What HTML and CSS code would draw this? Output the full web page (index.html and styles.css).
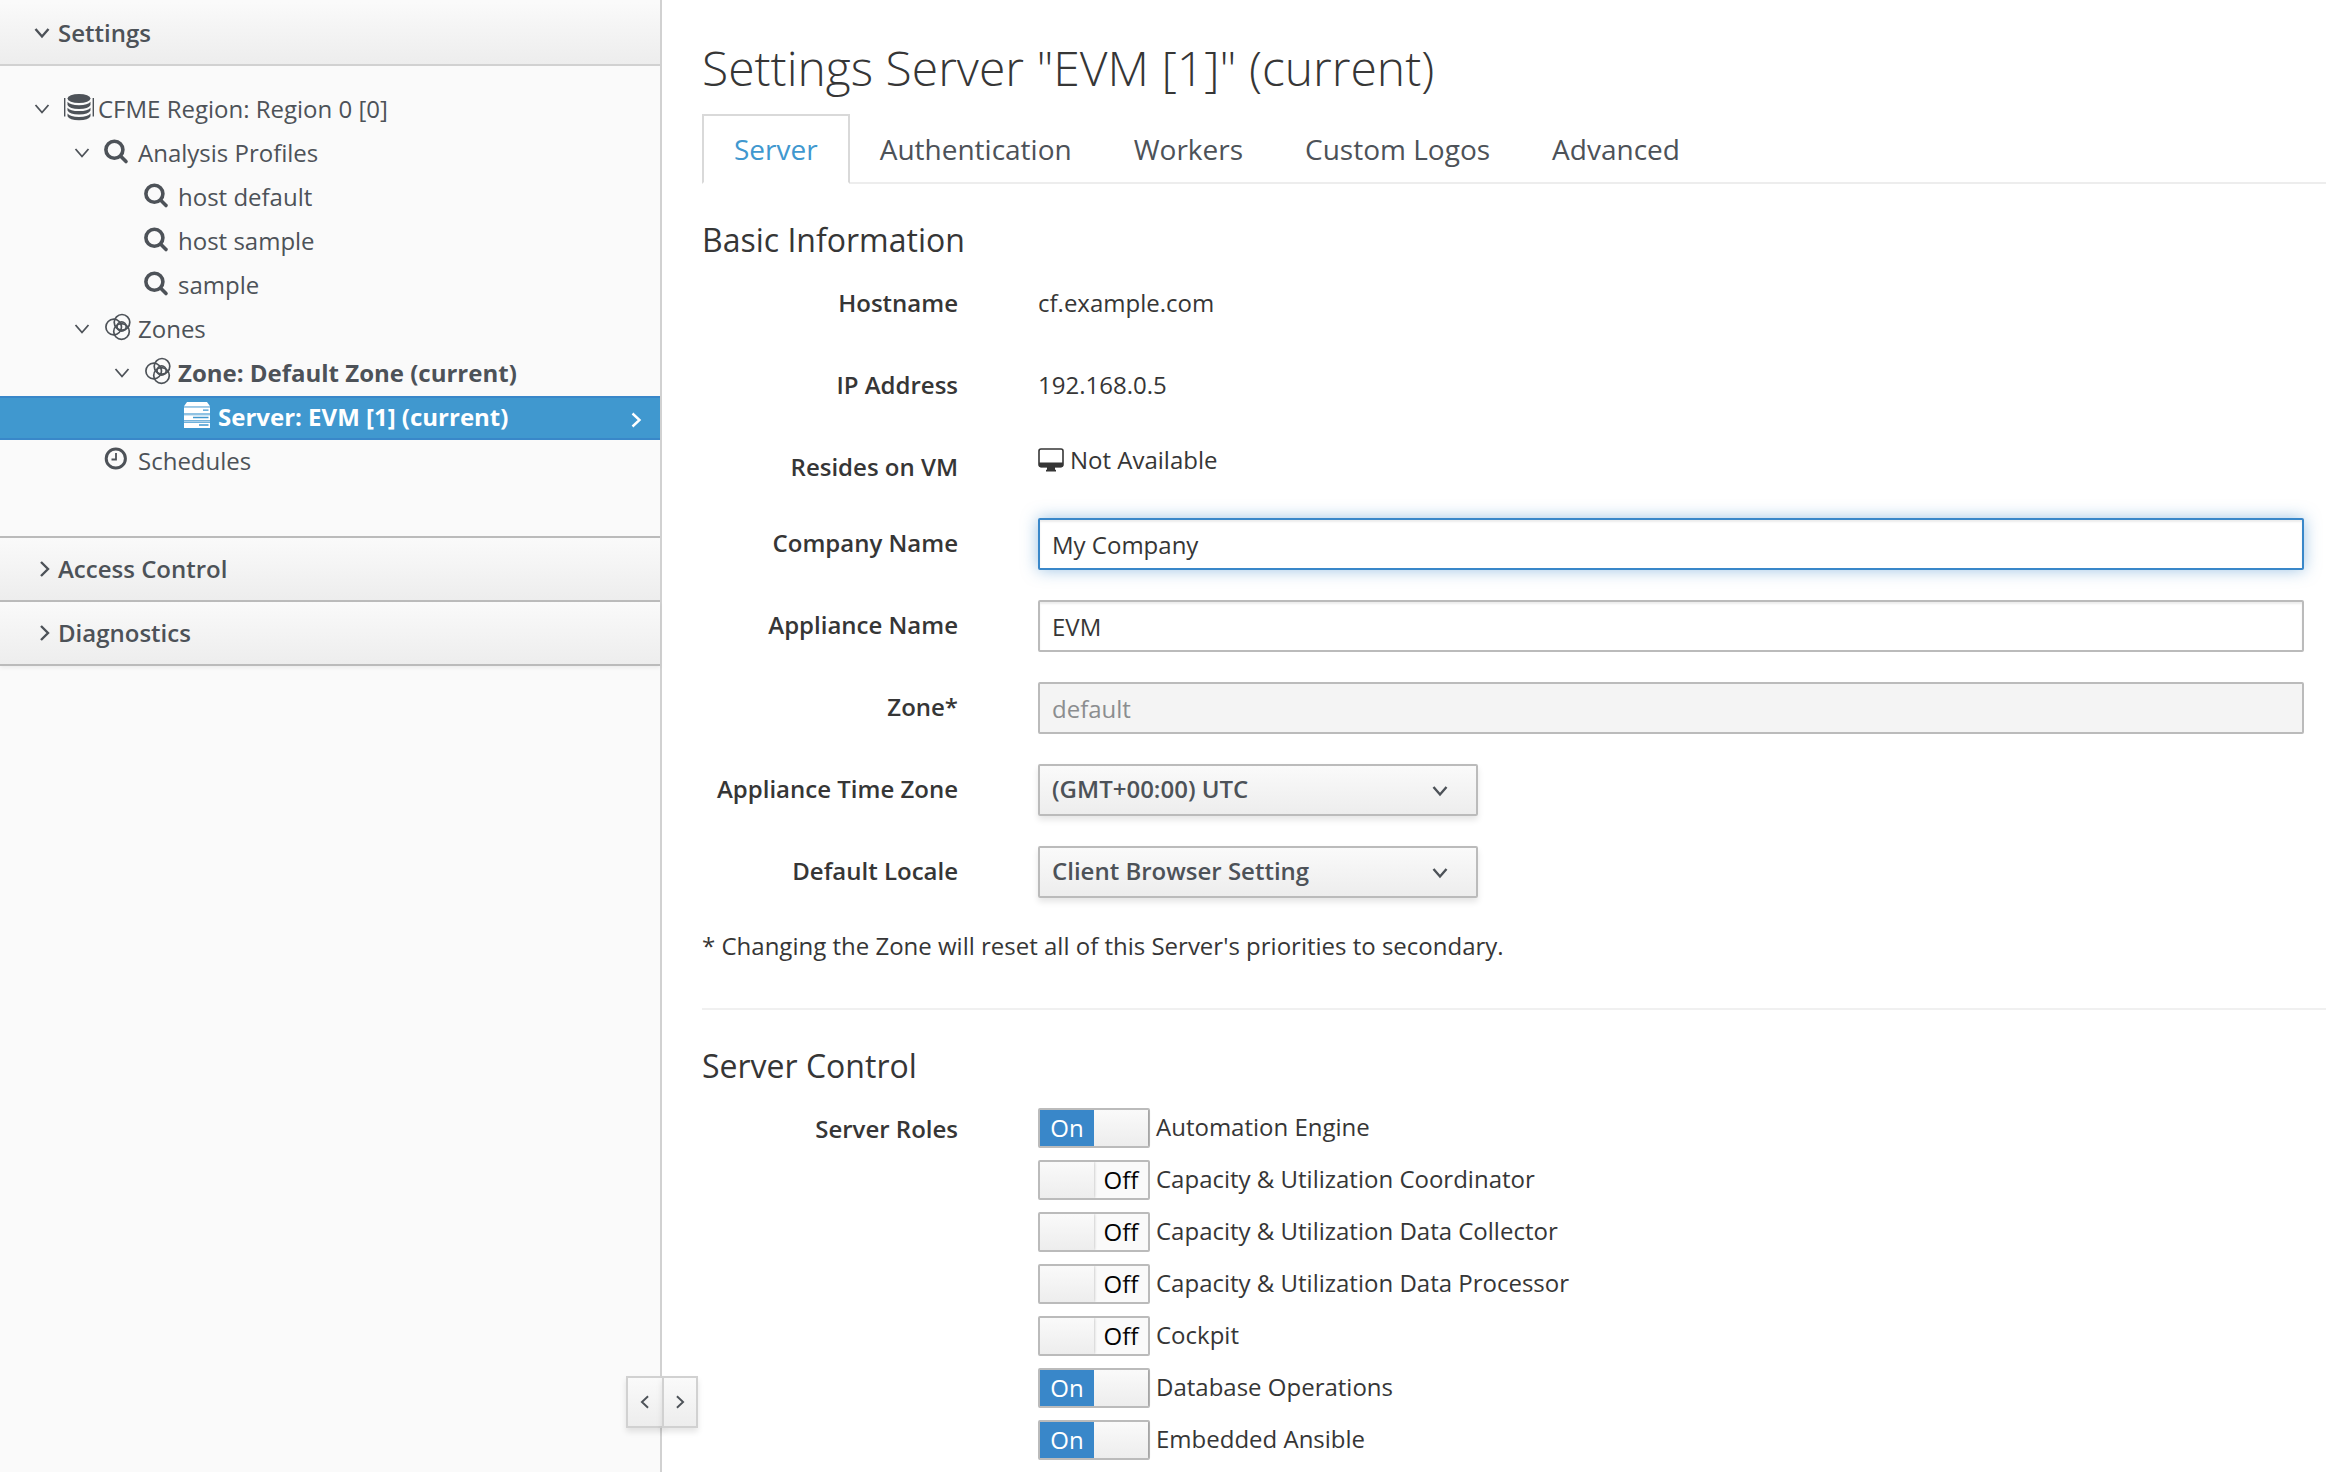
FILE: index.html
```html
<!DOCTYPE html>
<html lang="en">
<head>
<meta charset="utf-8">
<title>Settings Server</title>
<link rel="stylesheet" href="styles.css">
</head>
<body>
<svg class="sprite" aria-hidden="true">
  <symbol id="i-down" viewBox="0 0 16 16"><path d="M1.500 4l6.500 7.500L14.500 4" fill="none" stroke="currentColor"/></symbol>
  <symbol id="i-right" viewBox="0 0 16 16"><path d="M4.500 1.500L11.500 8L4.500 14.500" fill="none" stroke="currentColor"/></symbol>
  <symbol id="i-closed" viewBox="0 0 16 16"><path d="M7 1l7 7l-7 7" fill="none" stroke="currentColor"/></symbol>
  <symbol id="i-left" viewBox="0 0 16 16"><path d="M11.500 1.500L4.500 8L11.500 14.500" fill="none" stroke="currentColor"/></symbol>
  <symbol id="i-glass" viewBox="0 0 30 30"><circle cx="10.400" cy="13.800" r="8.500" fill="none" stroke="currentColor" stroke-width="3.600"/><path d="M17 20.500l5 5" fill="none" stroke="currentColor" stroke-width="3.600" stroke-linecap="round"/></symbol>
  <symbol id="i-region" viewBox="0 0 30 30"><g fill="currentColor"><ellipse cx="15" cy="6.500" rx="11.500" ry="4.500"/><path d="M3.500 9.800q2.500 3.400 11.500 3.400t11.500-3.400v3.200q-2 4-11.500 4t-11.500-4zM3.500 15.700q2.500 3.400 11.500 3.400t11.500-3.400v2.900q-2 4-11.500 4t-11.500-4zM3.500 21.500q2.500 3.400 11.500 3.400t11.500-3.400v2.700q-2 4-11.500 4t-11.500-4z"/></g><path d="M.7 6v18.500M29.300 6v18.500" fill="none" stroke="currentColor" stroke-width="1.400"/></symbol>
  <symbol id="i-zone" viewBox="0 0 30 30"><g fill="none" stroke="currentColor" stroke-width="1.700"><circle cx="9.700" cy="15" r="7.800"/><circle cx="18" cy="10.300" r="7.800"/><circle cx="17.500" cy="19.500" r="7.800"/><circle cx="17.600" cy="14.500" r="4.600"/></g></symbol>
  <symbol id="i-server" viewBox="0 0 30 30"><g fill="currentColor"><path d="M3 2h20l3 4.200H0z"/><path d="M0 7.600h26v5.400H0zM0 15.300h26v4.700H0zM0 22.700h26V28H0z"/></g><path d="M0 7h26M0 14h26M0 21.300h26" fill="none" stroke="#a9d0ea" stroke-width="1.400"/><path d="M19 10.200h5.500M9 17.500h15.500M15 25h9.500" fill="none" stroke="#4098cf" stroke-width="1.300"/></symbol>
  <symbol id="i-clock" viewBox="0 0 30 30"><circle cx="11.800" cy="14.500" r="9.600" fill="none" stroke="currentColor" stroke-width="3"/><path d="M12 9v6.500H7.500" fill="none" stroke="currentColor" stroke-width="1.800"/></symbol>
  <symbol id="i-screen" viewBox="0 0 26 24"><rect x="1" y="1" width="24" height="17.500" rx="2" fill="none" stroke="currentColor" stroke-width="1.600"/><path d="M1 14.500h24v3q0 2-2 2H17v1.500q0 1 1 1v1.500H8v-1.500q1 0 1-1V19.500H3q-2 0-2-2z" fill="currentColor"/></symbol>
</svg>

<div class="layout">
  <aside class="sidebar">
    <button class="panel-head first" type="button" aria-expanded="true"><svg class="chev"><use href="#i-down"/></svg>Settings</button>
    <ul class="tree">
      <li><a class="node" href="#region"><svg class="twist"><use href="#i-down"/></svg><svg class="glyph"><use href="#i-region"/></svg>CFME Region: Region 0 [0]</a>
        <ul>
          <li><a class="node l1" href="#profiles"><svg class="twist"><use href="#i-down"/></svg><svg class="glyph"><use href="#i-glass"/></svg>Analysis Profiles</a>
            <ul>
              <li><a class="node l2 leaf" href="#host-default"><svg class="glyph"><use href="#i-glass"/></svg>host default</a></li>
              <li><a class="node l2 leaf" href="#host-sample"><svg class="glyph"><use href="#i-glass"/></svg>host sample</a></li>
              <li><a class="node l2 leaf" href="#sample"><svg class="glyph"><use href="#i-glass"/></svg>sample</a></li>
            </ul>
          </li>
          <li><a class="node l1" href="#zones"><svg class="twist"><use href="#i-down"/></svg><svg class="glyph"><use href="#i-zone"/></svg>Zones</a>
            <ul>
              <li><a class="node l2 strong" href="#zone-default"><svg class="twist"><use href="#i-down"/></svg><svg class="glyph"><use href="#i-zone"/></svg>Zone: Default Zone (current)</a>
                <ul>
                  <li><a class="node l3 leaf strong selected" href="#server-evm"><svg class="glyph"><use href="#i-server"/></svg>Server: EVM [1] (current)<svg class="go"><use href="#i-right"/></svg></a></li>
                </ul>
              </li>
            </ul>
          </li>
          <li><a class="node l1 leaf" href="#schedules"><svg class="glyph"><use href="#i-clock"/></svg>Schedules</a></li>
        </ul>
      </li>
    </ul>
    <button class="panel-head" type="button" aria-expanded="false"><svg class="chev"><use href="#i-closed"/></svg>Access Control</button>
    <button class="panel-head last" type="button" aria-expanded="false"><svg class="chev"><use href="#i-closed"/></svg>Diagnostics</button>
    <div class="resizer">
      <button type="button" aria-label="Shrink sidebar"><svg><use href="#i-left"/></svg></button>
      <button type="button" aria-label="Widen sidebar"><svg><use href="#i-right"/></svg></button>
    </div>
  </aside>

  <main class="content">
    <h1>Settings Server "EVM [1]" (current)</h1>
    <nav class="tabs">
      <a class="tab active" href="#server">Server</a>
      <a class="tab" href="#authentication">Authentication</a>
      <a class="tab" href="#workers">Workers</a>
      <a class="tab" href="#logos">Custom Logos</a>
      <a class="tab" href="#advanced">Advanced</a>
    </nav>

    <section>
      <h2>Basic Information</h2>
      <div class="fields">
        <div class="field"><span class="label">Hostname</span><span class="static">cf.example.com</span></div>
        <div class="field"><span class="label">IP Address</span><span class="static">192.168.0.5</span></div>
        <div class="field compact"><span class="label">Resides on VM</span><span class="vm"><svg><use href="#i-screen"/></svg>Not Available</span></div>
        <div class="field"><label class="label" for="company">Company Name</label><input class="text focused" id="company" type="text" value="My Company"></div>
        <div class="field"><label class="label" for="appliance">Appliance Name</label><input class="text" id="appliance" type="text" value="EVM"></div>
        <div class="field"><label class="label" for="zone">Zone*</label><input class="text" id="zone" type="text" value="default" disabled></div>
        <div class="field"><label class="label" for="timezone">Appliance Time Zone</label><span class="picker"><select id="timezone"><option>(GMT+00:00) UTC</option></select><svg><use href="#i-down"/></svg></span></div>
        <div class="field"><label class="label" for="locale">Default Locale</label><span class="picker"><select id="locale"><option>Client Browser Setting</option></select><svg><use href="#i-down"/></svg></span></div>
      </div>
      <p class="note">* Changing the Zone will reset all of this Server's priorities to secondary.</p>
    </section>

    <section class="divided">
      <h2>Server Control</h2>
      <div class="field" role="group" aria-labelledby="roles">
        <span class="label" id="roles">Server Roles</span>
        <div class="roles">
          <label class="role"><span class="switch"><input type="checkbox" checked><span class="on">On</span><span class="knob"></span><span class="off">Off</span></span>Automation Engine</label>
          <label class="role"><span class="switch"><input type="checkbox"><span class="on">On</span><span class="knob"></span><span class="off">Off</span></span>Capacity &amp; Utilization Coordinator</label>
          <label class="role"><span class="switch"><input type="checkbox"><span class="on">On</span><span class="knob"></span><span class="off">Off</span></span>Capacity &amp; Utilization Data Collector</label>
          <label class="role"><span class="switch"><input type="checkbox"><span class="on">On</span><span class="knob"></span><span class="off">Off</span></span>Capacity &amp; Utilization Data Processor</label>
          <label class="role"><span class="switch"><input type="checkbox"><span class="on">On</span><span class="knob"></span><span class="off">Off</span></span>Cockpit</label>
          <label class="role"><span class="switch"><input type="checkbox" checked><span class="on">On</span><span class="knob"></span><span class="off">Off</span></span>Database Operations</label>
          <label class="role"><span class="switch"><input type="checkbox" checked><span class="on">On</span><span class="knob"></span><span class="off">Off</span></span>Embedded Ansible</label>
        </div>
      </div>
    </section>
  </main>
</div>
</body>
</html>
```
FILE: styles.css
```css
* { box-sizing: border-box; }

body {
  margin: 0;
  background: #fff;
  color: #363636;
  font-family: "Open Sans", "Noto Sans", sans-serif;
  font-size: 24px;
  line-height: 40px;
}

.sprite { display: none; }
h1, h2, p, ul { margin: 0; padding: 0; }
ul { list-style: none; }
a { color: inherit; text-decoration: none; }
button, input, select { font: inherit; color: inherit; }
svg { flex: none; }

.layout { display: flex; min-height: 100vh; }

/* Sidebar */
.sidebar {
  position: relative;
  flex: none;
  width: 662px;
  padding-top: 2px;
  border-right: 2px solid #d1d1d1;
  background: #fafafa;
  color: #4d5258;
}

.panel-head {
  display: flex;
  align-items: center;
  gap: 8px;
  width: 100%;
  height: 64px;
  padding: 0 34px;
  border: 0;
  border-bottom: 2px solid #bbb;
  background: linear-gradient(#fafafa, #ededed);
  font-weight: 600;
}
.panel-head.first { border-color: #d1d1d1; }
.panel-head.last { box-shadow: 0 2px 4px rgba(0, 0, 0, .06); }
.chev { width: 16px; height: 16px; stroke-width: 2.4px; }

.tree { padding-top: 22px; }
.tree > li { padding-bottom: 52px; border-bottom: 2px solid #bbb; }
.node {
  display: flex;
  align-items: flex-start;
  height: 44px;
  padding: 0 16px 2px 34px;
  line-height: 42px;
}
.l1 { padding-left: 74px; }
.l2 { padding-left: 114px; }
.l3 { padding-left: 154px; }
.leaf::before { content: ""; width: 30px; }
.strong { font-weight: 700; }
.twist { width: 16px; height: 16px; margin: 13px 14px 0 0; stroke-width: 1.8px; }
.glyph { width: 30px; height: 30px; margin: 4px 4px 0 0; }
.selected {
  background: #4098cf;
  box-shadow: inset 0 2px #3987c9, inset 0 -2px #3987c9;
  color: #fff;
}
.go { width: 16px; height: 16px; margin: 16px 0 0 auto; stroke-width: 2.4px; }

.resizer {
  position: absolute;
  right: -38px;
  bottom: 44px;
  display: flex;
}
.resizer button {
  display: grid;
  place-items: center;
  width: 38px;
  height: 52px;
  padding: 0;
  border: 2px solid #d1d1d1;
  background: linear-gradient(#fafafa, #ededed);
  box-shadow: 0 4px 6px rgba(3, 3, 3, .1);
}
.resizer button + button { width: 36px; margin-left: -2px; }
.resizer svg { width: 14px; height: 14px; stroke-width: 2.2px; }

/* Main column */
.content { flex: 1; min-width: 0; padding: 34px 0 12px 40px; }
h1 { margin-bottom: 12px; font-size: 48px; line-height: 68px; font-weight: 300; }
h2 { margin-bottom: 16px; font-size: 32px; line-height: 44px; font-weight: 400; }

.tabs {
  display: flex;
  margin-bottom: 34px;
  border-bottom: 2px solid #ededed;
  color: #4d5258;
  font-size: 28px;
  line-height: 66px;
}
.tab {
  margin: 0 -2px -2px 0;
  padding: 0 30px;
  border: 2px solid transparent;
}
.tab.active { border-color: #d9d9d9 #d9d9d9 #fff; background: #fff; color: #4098cf; }

.fields { display: grid; gap: 30px; }
.field {
  display: grid;
  grid-template-columns: 256px 1fr;
  column-gap: 80px;
  align-items: start;
  min-height: 52px;
  padding-right: 22px;
}
.field.compact { min-height: 46px; }
.label, .static { padding: 6px 0 2px; line-height: 38px; }
.label { font-weight: 600; text-align: right; }
.vm { display: flex; align-items: center; gap: 6px; line-height: 36px; }
.vm svg { width: 26px; height: 24px; }

.text {
  width: 100%;
  height: 52px;
  padding: 0 12px;
  border: 2px solid #bbb;
  border-radius: 2px;
  background: #fff;
  box-shadow: inset 0 2px 2px rgba(3, 3, 3, .075);
}
.text.focused {
  border-color: #3987c9;
  outline: 0;
  box-shadow: inset 0 2px 2px rgba(3, 3, 3, .075), 0 0 16px rgba(57, 135, 201, .5);
}
.text:disabled { background: #f4f4f4; color: #8b8d8f; box-shadow: none; }

.picker { display: grid; width: 440px; max-width: 100%; }
.picker select, .picker svg { grid-area: 1 / 1; }
.picker select {
  appearance: none;
  height: 52px;
  padding: 0 40px 2px 12px;
  border: 2px solid #bbb;
  border-radius: 2px;
  background: linear-gradient(#fafafa, #ededed);
  box-shadow: 0 4px 6px rgba(3, 3, 3, .1);
  color: #4d5258;
  font-weight: 600;
}
.picker svg {
  width: 16px;
  height: 16px;
  margin: 2px 30px 0 0;
  place-self: center end;
  color: #4d5258;
  stroke-width: 2.4px;
  pointer-events: none;
}

.note { margin-top: 28px; }
.divided { margin-top: 42px; padding-top: 34px; border-top: 2px solid #f0f0f0; }

/* Role switches */
.roles { display: grid; gap: 12px; padding-top: 4px; }
.role { display: flex; gap: 6px; line-height: 38px; }
.switch {
  position: relative;
  display: grid;
  grid-template-columns: 1fr 1fr;
  flex: none;
  width: 112px;
  height: 40px;
  border: 2px solid #bbb;
  border-radius: 2px;
  background: #fafafa;
  line-height: 36px;
  text-align: center;
}
.switch input { position: absolute; inset: 0; width: 100%; height: 100%; margin: 0; opacity: 0; }
.on { background: #3987c9; color: #fff; }
.off { color: #030303; }
.knob { background: linear-gradient(#fafafa, #ededed); box-shadow: 0 0 3px rgba(0, 0, 0, .3); clip-path: inset(0 -3px 0 0); }
.switch input:checked ~ .off, .switch input:not(:checked) ~ .on { display: none; }
```
